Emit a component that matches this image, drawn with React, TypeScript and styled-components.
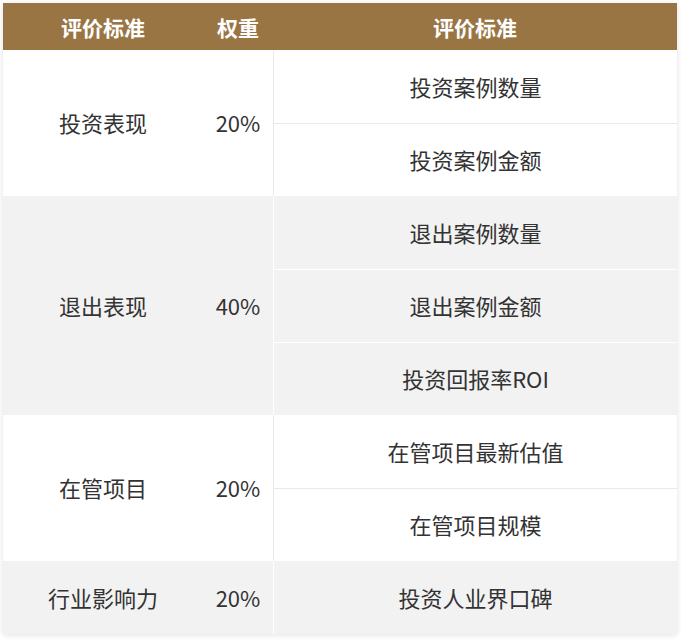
import React from "react";
import styled, { createGlobalStyle } from "styled-components";

const GlobalStyle = createGlobalStyle`
    html, body {
        margin: 0;
        padding: 0;
        background: #ffffff;
    }
    body {
        font-family: "Noto Sans CJK SC", "Noto Sans", sans-serif;
    }
`;

interface Group {
    name: string;
    weight: string;
    items: string[];
}

const groups: Group[] = [
    { name: "投资表现", weight: "20%", items: ["投资案例数量", "投资案例金额"] },
    {
        name: "退出表现",
        weight: "40%",
        items: ["退出案例数量", "退出案例金额", "投资回报率ROI"],
    },
    { name: "在管项目", weight: "20%", items: ["在管项目最新估值", "在管项目规模"] },
    { name: "行业影响力", weight: "20%", items: ["投资人业界口碑"] },
];

const Page = styled.div`
    padding: 3px 4px 8px 3px;
`;

const Table = styled.div`
    width: 674px;
    box-shadow: 0 1px 6px rgba(0, 0, 0, 0.12);
`;

const Columns = styled.div`
    display: grid;
    grid-template-columns: 200px 70px 1fr;
`;

const HeaderRow = styled(Columns)`
    height: 47px;
    background: #9a7544;
    color: #ffffff;
    font-size: 21px;
    font-weight: 700;
`;

const HeadCell = styled.div`
    display: flex;
    align-items: center;
    justify-content: center;
`;

const GroupRow = styled(Columns)<{ $shade: boolean }>`
    background: ${(p) => (p.$shade ? "#f2f2f2" : "#ffffff")};
    color: #333333;
    font-size: 22px;
`;

const LabelCell = styled.div`
    display: flex;
    align-items: center;
    justify-content: center;
    padding-bottom: 2px;
`;

const ItemList = styled.div<{ $line: string }>`
    display: flex;
    flex-direction: column;
    border-left: 1px solid ${(p) => p.$line};
`;

const Item = styled.div<{ $line: string; $first: boolean }>`
    height: 73px;
    box-sizing: border-box;
    display: flex;
    align-items: center;
    justify-content: center;
    padding-bottom: 2px;
    border-top: ${(p) => (p.$first ? "none" : `1px solid ${p.$line}`)};
`;

const App = () => {
    return (
        <Page>
            <GlobalStyle />
            <Table>
                <HeaderRow>
                    <HeadCell>评价标准</HeadCell>
                    <HeadCell>权重</HeadCell>
                    <HeadCell>评价标准</HeadCell>
                </HeaderRow>
                {groups.map((group, key) => {
                    const shade = key % 2 === 1;
                    const line = shade ? "#ffffff" : "#e9e9e9";
                    return (
                        <GroupRow $shade={shade} key={`group-${key}`}>
                            <LabelCell>{group.name}</LabelCell>
                            <LabelCell>{group.weight}</LabelCell>
                            <ItemList $line={line}>
                                {group.items.map((item, i) => (
                                    <Item $line={line} $first={i === 0} key={item}>
                                        {item}
                                    </Item>
                                ))}
                            </ItemList>
                        </GroupRow>
                    );
                })}
            </Table>
        </Page>
    );
};

export default App;
